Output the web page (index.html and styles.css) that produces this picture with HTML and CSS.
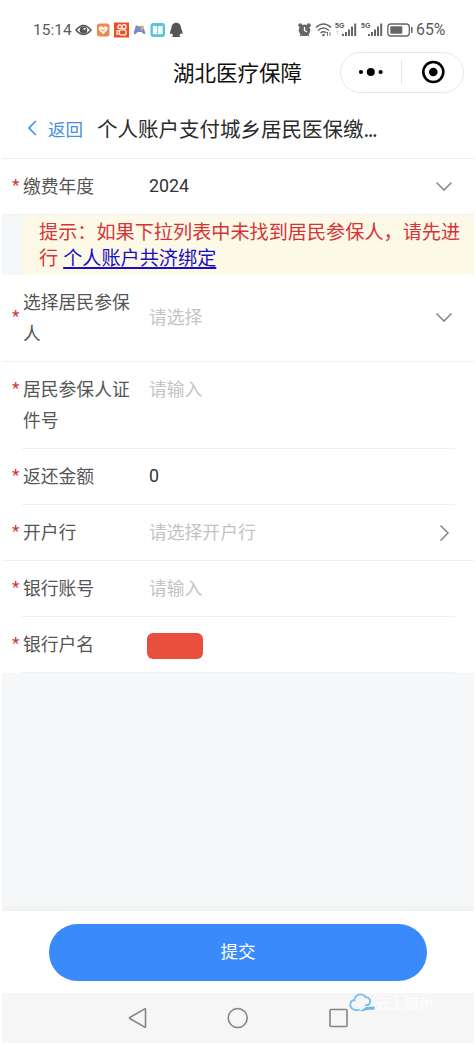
FILE: index.html
```html
<!DOCTYPE html>
<html lang="zh-CN">
<head>
<meta charset="utf-8">
<title>湖北医疗保障</title>
<link rel="stylesheet" href="styles.css">
</head>
<body>
<div class="app">
  <div class="status">
    <span class="clock">15:14</span>
    <svg class="apps" width="110" height="18" viewBox="0 0 110 18">
      <path d="M1 9Q8.500 0 16 9Q8.500 18 1 9Z" fill="#fff" stroke="#555" stroke-width="1.500"/>
      <circle cx="8.500" cy="9" r="3.800" fill="#555"/><circle cx="9.500" cy="7.800" r="1.100" fill="#fff"/>
      <rect x="22" y="2.500" width="12.500" height="13" rx="2.500" fill="#ee8850"/>
      <path d="M28.200 13.200L24.200 9.200C22.500 6 26.500 4 28.200 6.500C30 4 34 6 32.200 9.200Z" fill="#fff8e8"/>
      <path d="M26.300 8.500Q28.200 11 30.200 8.500" fill="none" stroke="#ee8850"/>
      <rect x="39" y="1.500" width="15" height="15" fill="#ee4f1d"/>
      <g fill="none" stroke="#fff" stroke-width="1.200"><circle cx="44.800" cy="5.800" r="1.900"/><circle cx="49" cy="5.800" r="2.100"/><rect x="44.500" y="9" width="6.500" height="4.800" rx="1"/><path d="M44.500 10.300L42 9.500V13.300L44.500 12.500"/></g>
      <path d="M61 4.500Q64.500 6 68 4.500L70.300 12Q70 15 66.500 11H62.500Q59 15 58.800 12Z" fill="#6c8fd8"/>
      <path d="M61 4.500L63 5L62.500 11Q59 15 58.800 12Z" fill="#8a83cb"/><path d="M65.500 5L68 4.500L69 8L66 9.500Z" fill="#f2ab5c"/>
      <rect x="75.500" y="2" width="14.500" height="14" rx="3" fill="#50c5dc"/>
      <path d="M77.800 4.700L82.300 5.200V13.500L77.800 13ZM83.200 5.200L87.700 4.700V13L83.200 13.500Z" fill="#fff"/>
      <path d="M96.500 7C96.500 0 106 0 106 7L107.500 11V13L105.500 12.500L104.500 14.500L105.500 16H97L98 14.500L97 12.500L95 13V11Z" fill="#555"/>
    </svg>
    <svg class="signals" width="115" height="18" viewBox="0 0 115 18">
      <g fill="#666"><circle cx="6.500" cy="9.300" r="5.800"/><circle cx="2.300" cy="4.300" r="2"/><circle cx="10.700" cy="4.300" r="2"/><path d="M1.500 15.500L3 12H10L11.500 15.500L9 14.500H4Z"/></g>
      <path d="M6.500 6V9.500L9 11" fill="none" stroke="#fff" stroke-width="1.300"/>
      <g fill="none" stroke="#666" stroke-width="1.500"><path d="M18 6.500Q25.500 -0.500 33 6.500M20 9.500Q25.500 4.500 31 9.500M22.500 12Q25.500 9.500 28.500 12"/></g>
      <circle cx="25.500" cy="14" r="1.300" fill="#666"/><path d="M29.500 11V15M32 11V15" stroke="#777"/>
      <text class="five" x="37" y="7">5G</text><text class="tiny" x="37" y="14">↑↓</text>
      <g fill="#666"><path d="M44 13h2v2h-2zM47 11h2v4h-2zM50 8.500h2v6.500h-2zM53 5.500h2v9.500h-2zM56.200 2.500h2v12.500h-2z"/><path d="M70 13h2v2h-2zM73 11h2v4h-2zM76 8.500h2v6.500h-2zM79 5.500h2v9.500h-2zM82.200 2.500h2v12.500h-2z"/></g>
      <text class="five" x="63" y="7">5G</text>
      <rect x="89.800" y="3" width="21.500" height="12" rx="3" fill="none" stroke="#666" stroke-width="1.300"/><rect x="92.300" y="5.200" width="12" height="7.600" rx="1" fill="#666"/><path d="M113.800 6V12" stroke="#666" stroke-width="1.500"/>
    </svg>
    <span class="percent">65%</span>
  </div>

  <header class="titlebar">
    <h1 class="title">湖北医疗保障</h1>
    <div class="capsule">
      <svg width="122" height="40" viewBox="0 0 122 40"><circle cx="20" cy="19" r="2.100"/><circle cx="29.800" cy="19" r="4"/><circle cx="39.600" cy="19" r="2.100"/><path d="M60.500 7V31" stroke="#e4e4e4"/><circle cx="92.300" cy="19" r="10" fill="none" stroke="#000" stroke-width="2.600"/><circle cx="92.300" cy="19" r="4.300"/></svg>
    </div>
  </header>

  <nav class="pagebar">
    <svg width="10" height="16" viewBox="0 0 10 16"><path d="M8.800 1L2 8L8.800 15" fill="none" stroke="#4590df" stroke-width="1.700"/></svg>
    <span class="back">返回</span>
    <h2 class="pagename">个人账户支付城乡居民医保缴<span class="dots">...</span></h2>
  </nav>

  <main class="form">
    <div class="row full"><i class="star">*</i><label class="label">缴费年度</label><span class="value">2024</span>
      <svg class="arrow" width="18" height="18" viewBox="0 0 18 18"><path d="M1.500 5.500L9 13L16.500 5.500" /></svg></div>
    <div class="hint">
      <div class="line">提示：如果下拉列表中未找到居民参保人，请先进</div>
      <div class="line"><span>行</span><a class="bind" href="#">个人账户共济绑定</a></div>
    </div>
    <div class="row tall full"><i class="star">*</i><label class="label">选择居民参保人</label><span class="value empty">请选择</span>
      <svg class="arrow" width="18" height="18" viewBox="0 0 18 18"><path d="M1.500 5.500L9 13L16.500 5.500" /></svg></div>
    <div class="row tall top"><i class="star">*</i><label class="label">居民参保人证件号</label><span class="value empty">请输入</span></div>
    <div class="row"><i class="star">*</i><label class="label">返还金额</label><span class="value">0</span></div>
    <div class="row full"><i class="star">*</i><label class="label">开户行</label><span class="value empty">请选择开户行</span>
      <svg class="arrow" width="18" height="18" viewBox="0 0 18 18"><path d="M5.500 2.500L13 10L5.500 17.500" /></svg></div>
    <div class="row"><i class="star">*</i><label class="label">银行账号</label><span class="value empty">请输入</span></div>
    <div class="row"><i class="star">*</i><label class="label">银行户名</label><span class="mask"></span></div>
  </main>

  <div class="spacer"></div>
  <footer class="footer"><button class="submit">提交</button></footer>

  <div class="keys">
    <svg width="20" height="22" viewBox="0 0 20 22"><path d="M18.500 2.200V19.800Q18.500 20.500 17.800 20.100L2.800 11.500Q2.200 11 2.800 10.500L17.800 1.900Q18.500 1.500 18.500 2.200Z"/></svg>
    <svg width="22" height="22" viewBox="0 0 22 22"><circle cx="10.700" cy="11" r="9.500"/></svg>
    <svg width="20" height="20" viewBox="0 0 20 20"><rect x="1" y="1.500" width="17" height="17" rx="1"/></svg>
    <div class="watermark">
      <svg width="27" height="19" viewBox="0 0 27 19"><path class="cloud" d="M10.500 16.500C6 18.500 1 15.500 1.300 11.500C1.500 8.500 3.500 7.300 5.500 7.300C5.500 1 14 -.5 16.500 4.300C20 4 22.500 7.500 20.500 10.500C19.500 12.500 17.500 12.500 16 12.500"/><path class="tail" d="M9 17.500C14 18.500 15 13.500 19 14L25.500 13.500V16.500L18 17Q13 19 9 17.500Z"/></svg>
      <span>云上随州</span>
    </div>
  </div>
</div>
</body>
</html>
```
FILE: styles.css
```css
* { box-sizing: border-box; }
body {
  margin: 0;
  background: #fff;
  font-family: "Noto Sans CJK SC", sans-serif;
  color: #2b2b2b;
}
.app {
  width: 472px;
  height: 1043px;
  margin: 0 2px 2px;
  display: flex;
  flex-direction: column;
}
.status {
  height: 48px;
  padding: 12px 27px 0 31px;
  display: flex;
  align-items: center;
  font: 15.500px/18px Roboto, sans-serif;
  color: #5b5b5b;
}
.clock { width: 42px; font-size: 15.500px; }
.apps { flex: none; }
.signals { margin-left: auto; flex: none; }
.percent { width: 31px; margin-left: 3px; font-size: 15.800px; }
.five { font: bold 7px "Liberation Sans", sans-serif; fill: #555; }
.tiny { font: 6px "DejaVu Sans", sans-serif; fill: #ccc; }
.titlebar {
  height: 48px;
  display: grid;
  grid-template-columns: 338px 124px;
  align-items: center;
}
.title {
  margin: 0;
  padding-left: 171px;
  font-size: 21.500px;
  line-height: 30px;
  font-weight: 400;
  color: #111;
  white-space: nowrap;
}
.capsule {
  height: 41px;
  border: 1px solid #e8e8e8;
  border-radius: 21px;
}
.capsule svg { display: block; }
.pagebar {
  height: 63px;
  padding: 2px 0 0 25px;
  display: flex;
  align-items: center;
  border-bottom: 1px solid #eee;
}
.back { margin-left: 11px; width: 49px; font-size: 17.500px; color: #4590df; }
.pagename { margin: 0; font-size: 20.500px; line-height: 30px; font-weight: 400; white-space: nowrap; }
.dots { letter-spacing: -1.500px; }
.form { background: #f6f7f9; }
.row {
  position: relative;
  height: 56px;
  padding: 0 20px 3px 10px;
  display: flex;
  align-items: center;
  background: #fff;
  font-size: 17.800px;
  line-height: 31px;
}
.row::after {
  content: "";
  position: absolute;
  left: 20px;
  right: 19px;
  bottom: 0;
  border-bottom: 1px solid #f1f1f1;
}
.row.full::after { left: 0; right: 0; }
.tall { height: 87px; }
.top { align-items: flex-start; padding-top: 11px; }
.star { width: 11px; padding-bottom: 2px; font: normal 17px/22px Roboto, sans-serif; color: #cf2f35; }
.top .star { padding-top: 4px; }
.label { width: 108px; margin-right: 18px; color: #555; }
.value { flex: 1; font-family: Roboto, "Noto Sans CJK SC", sans-serif; font-size: 17.800px; color: #333; }
.empty { padding-top: 1px; color: #c3c3c3; }
.arrow { flex: none; margin-right: 1px; fill: none; stroke: #8b8b8b; stroke-width: 1.600; }
.mask { width: 56px; height: 26px; margin-left: -2px; margin-top: 4px; border-radius: 6px; background: #e84f3d; }
.hint {
  height: 60px;
  margin-left: 20px;
  padding: 3px 10px 0 17px;
  background: #fcf9e7;
  color: #d63439;
  font-size: 19.150px;
  line-height: 26px;
}
.line { display: flex; gap: 5px; height: 26px; white-space: nowrap; }
.bind { color: #1a0dc4; text-decoration: underline; text-decoration-thickness: 1.500px; text-underline-offset: 2px; }
.spacer { flex: 1; background: linear-gradient(#f6f7f9 calc(100% - 8px), #f0f2f2); }
.footer { height: 82px; padding: 13px 47px 12px; background: #fff; }
.submit {
  display: block;
  width: 100%;
  height: 57px;
  padding: 0 0 3px;
  border: 0;
  border-radius: 29px;
  background: #3b8afc;
  color: #fff;
  font: 17.500px/26px "Noto Sans CJK SC", sans-serif;
}
.keys {
  position: relative;
  height: 50px;
  padding: 0 125px 0 125px;
  display: flex;
  align-items: center;
  justify-content: space-between;
  background: #f6f6f6;
}
.keys > svg { fill: none; stroke: #858585; stroke-width: 1.600; }
.watermark {
  position: absolute;
  left: 347px;
  top: 0;
  display: flex;
  align-items: center;
  font-size: 14.300px;
  line-height: 19px;
  font-weight: 500;
  color: #fdfdfd;
}
.cloud { fill: none; stroke: #7cc0ee; stroke-width: 1.900; }
.tail { fill: #68b9ee; }
```
